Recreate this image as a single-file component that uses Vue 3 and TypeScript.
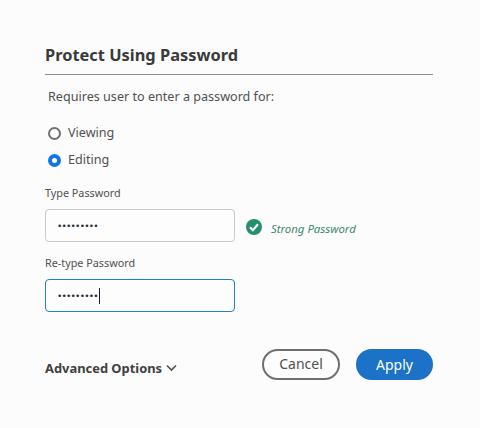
<script setup lang="ts">
const dots = '•••••••••'
</script>

<template>
  <div class="page">
    <h1 class="title">Protect Using Password</h1>
    <p class="intro">Requires user to enter a password for:</p>
    <div class="radio"><span class="ring"></span><span>Viewing</span></div>
    <div class="radio second"><span class="ring on"></span><span>Editing</span></div>
    <div class="label first">Type Password</div>
    <div class="row">
      <div class="input"><span class="dots">{{ dots }}</span></div>
      <svg class="check" width="16" height="16" viewBox="0 0 16 16">
        <circle cx="8" cy="8" r="8" fill="#268e6c" />
        <path d="M4 8.2l2.9 3L12 5.3" fill="none" stroke="#fff" stroke-width="2.2" />
      </svg>
      <span class="strong">Strong Password</span>
    </div>
    <div class="label second-label">Re-type Password</div>
    <div class="input focus"><span class="dots">{{ dots }}</span><span class="caret"></span></div>
    <div class="footer">
      <div class="advanced">
        <span>Advanced Options</span>
        <svg width="11" height="8" viewBox="0 0 11 8">
          <path d="M1 1.5l4.5 4.5L10 1.5" fill="none" stroke="#505050" stroke-width="1.6" />
        </svg>
      </div>
      <div class="buttons">
        <button class="btn cancel">Cancel</button>
        <button class="btn apply">Apply</button>
      </div>
    </div>
  </div>
</template>

<style>
html, body { margin: 0; background: #fcfcfc; }
</style>

<style scoped>
.page {
  width: 480px;
  height: 428px;
  box-sizing: border-box;
  padding: 43px 47px 0 45px;
  background: #fcfcfc;
  font-family: "Noto Sans", "Open Sans", sans-serif;
  color: #505050;
  font-size: 12.6px;
  overflow: hidden;
}
.title {
  margin: 0;
  height: 31px;
  line-height: 24px;
  font-size: 16.4px;
  font-weight: 700;
  color: #3a3a3a;
  border-bottom: 1px solid #8e8e8e;
}
.intro { margin: 12px 0 0 3px; line-height: 20px; height: 20px; }
.radio {
  display: flex;
  align-items: center;
  gap: 7px;
  margin: 16px 0 0 3px;
  height: 20px;
  line-height: 20px;
}
.radio.second { margin-top: 7px; }
.ring {
  width: 13px;
  height: 13px;
  box-sizing: border-box;
  border: 2px solid #707070;
  border-radius: 50%;
}
.ring.on { border: 4px solid #1473e6; background: #fff; }
.label { font-size: 10.8px; line-height: 16px; height: 16px; }
.label.first { margin-top: 15px; }
.label.second-label { margin-top: 13px; }
.row { display: flex; align-items: center; margin-top: 8px; }
.input {
  width: 190px;
  height: 33px;
  box-sizing: border-box;
  border: 1px solid #cacaca;
  border-radius: 4px;
  background: #fdfdfd;
  display: flex;
  align-items: center;
  padding-left: 12px;
}
.input.focus { border: 1.5px solid #2680c2; margin-top: 8px; }
.dots { font-size: 9.5px; letter-spacing: 1.2px; color: #2c2c2c; font-family: "Liberation Sans", sans-serif; }
.caret { width: 1px; height: 16px; background: #222; margin-left: 0; }
.check { margin-left: 11px; margin-top: 3px; }
.strong {
  margin-left: 9px;
  margin-top: 5px;
  font-size: 11.4px;
  font-style: italic;
  color: #3c8a70;
}
.footer {
  display: flex;
  justify-content: space-between;
  align-items: center;
  margin-top: 37px;
}
.advanced {
  display: flex;
  align-items: center;
  gap: 4px;
  font-size: 12.9px;
  font-weight: 700;
  color: #404040;
  margin-top: 7px;
}
.buttons { display: flex; gap: 16px; }
.btn {
  height: 31px;
  box-sizing: border-box;
  border-radius: 16px;
  font-family: inherit;
  font-size: 14px;
  padding: 0 0 2px;
}
.cancel { width: 78px; background: #fdfdfd; border: 2px solid #6e6e6e; color: #505050; }
.apply { width: 77px; background: #1b72c6; border: none; color: #fff; padding-bottom: 0; }
</style>
